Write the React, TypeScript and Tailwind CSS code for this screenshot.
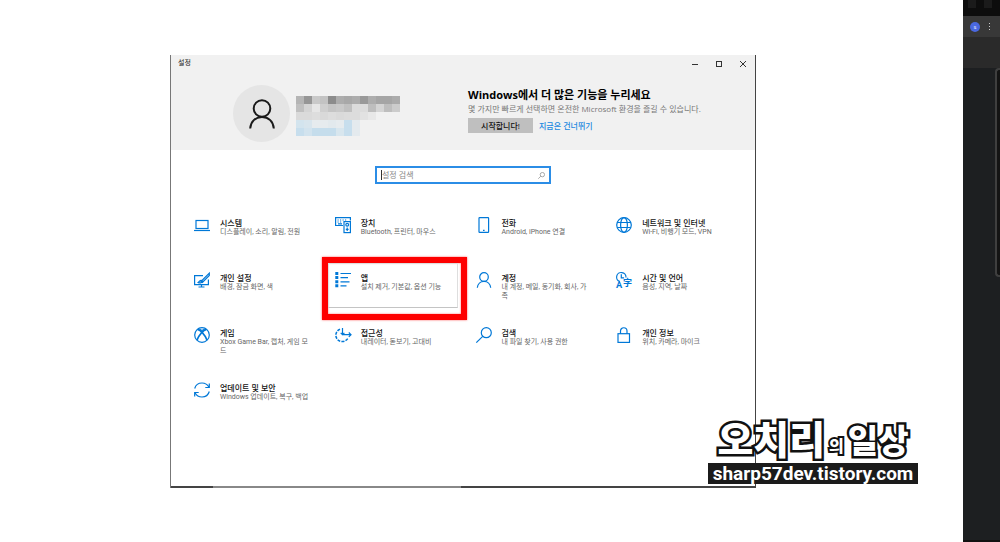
import type { ReactNode } from 'react'

type Setting = { title: string; desc: string; icon: ReactNode; marked?: boolean }

const SETTINGS: Setting[] = [
  {
    title: '시스템', desc: '디스플레이, 소리, 알림, 전원',
    icon: <><rect x="2" y="3.5" width="12" height="8" /><path d="M0 13.5h16" /></>,
  },
  {
    title: '장치', desc: 'Bluetooth, 프린터, 마우스',
    icon: (
      <>
        <path d="M8 8.5H.6V.6h14.8v3" />
        <path d="M2.5 3h1.2M5 3h1.2M7.5 3h1.2M10 3h1.2M2.5 5h1.2M5 5h1.2M3 6.9h4" />
        <rect x="9" y="4.6" width="6.4" height="11" />
        <circle cx="12.2" cy="7.8" r="1.4" />
        <path d="M12.2 10.6v3.4M10.800 12.3h2.8" />
      </>
    ),
  },
  {
    title: '전화', desc: 'Android, iPhone 연결',
    icon: <><rect x="3" y=".6" width="9.6" height="14.8" rx=".6" /><path d="M7 13.3h1.6" /></>,
  },
  {
    title: '네트워크 및 인터넷', desc: 'Wi-Fi, 비행기 모드, VPN',
    icon: (
      <>
        <circle cx="8" cy="8" r="7.3" />
        <ellipse cx="8" cy="8" rx="3.4" ry="7.3" />
        <path d="M1.2 5.5h13.6M1.2 10.5h13.6" />
      </>
    ),
  },
  {
    title: '개인 설정', desc: '배경, 잠금 화면, 색',
    icon: (
      <>
        <path d="M9 3.600H.6v9h13.800V7.500M7.500 12.600V15M4.500 15h6" />
        <path d="M15.300 1.200 8.500 8 7 9.500l1.400 1 6.900-7z" />
        <path d="M7.200 8.300c-1.600 0-1.800 1.600-3 2.200 1.400.8 3.800.4 4.200-1z" />
      </>
    ),
  },
  {
    title: '앱', desc: '설치 제거, 기본값, 옵션 기능', marked: true,
    icon: (
      <>
        <path d="M5.500 1.500H16M5.500 5.700H13M5.500 9.800H14.500M5.500 13.800H11.500" />
        <path strokeWidth="3" strokeDasharray="3 1.100" d="M1.800 0v16" />
      </>
    ),
  },
  {
    title: '계정', desc: '내 계정, 메일, 동기화, 회사, 가족',
    icon: <><circle cx="8" cy="5" r="4.3" /><path d="M1.3 15.7C1.7 12 4.4 9.4 8 9.4s6.300 2.6 6.7 6.3" /></>,
  },
  {
    title: '시간 및 언어', desc: '음성, 지역, 날짜',
    icon: (
      <>
        <path d="M4 9.700A4.700 4.700 0 1 1 10 5.500" />
        <path d="M5.300 2.200v3.600h2.800" />
        <g fill="#0078d7" stroke="none" fontWeight="700">
          <text x="0" y="16" fontSize="9">A</text>
          <text x="7" y="14" fontSize="9">字</text>
        </g>
      </>
    ),
  },
  {
    title: '게임', desc: 'Xbox Game Bar, 캡처, 게임 모드',
    icon: (
      <>
        <circle cx="8" cy="8" r="7.3" />
        <path d="M3.600 2.400C6.500 3 11.500 8.500 13 13M12.400 2.400C9.500 3 4.500 8.500 3 13" strokeWidth="1.8" />
        <path d="M4 2c1.600 0 2.800.5 4 1.400C9.200 2.500 10.400 2 12 2" />
      </>
    ),
  },
  {
    title: '접근성', desc: '내레이터, 돋보기, 고대비',
    icon: (
      <>
        <path d="M5 2.200A6.400 6.400 0 1 0 13 11" strokeDasharray="3 1.2" strokeWidth="1.5" />
        <path d="M7.500 1v6.700H16M5.700 5.800l1.800 1.900 1.900-1.900M13.800 5.500 16 7.700l-2.200 2.200" />
      </>
    ),
  },
  {
    title: '검색', desc: '내 파일 찾기, 사용 권한',
    icon: <><circle cx="10.3" cy="5.7" r="5" /><path d="M6.700 9.300.3 15.700" /></>,
  },
  {
    title: '개인 정보', desc: '위치, 카메라, 마이크',
    icon: <><rect x="2" y="6.7" width="11.5" height="8.7" /><path d="M4.500 6.700V4a3.200 3.200 0 0 1 6.500 0v2.700" /></>,
  },
  {
    title: '업데이트 및 보안', desc: 'Windows 업데이트, 복구, 백업',
    icon: (
      <>
        <path d="M.7 6.500C1.700 3 4.500 1 8 1c3.200 0 5.700 1.700 7 4.300M15.300 9.500C14.300 13 11.500 15 8 15c-3.200 0-5.700-1.700-7-4.300" />
        <path d="M15.300 1.500v4h-4M.7 14.500v-4h4" />
      </>
    ),
  },
]

// account name and mail, pixelated in 8px blocks
const MOSAIC = [
  ['bg-[#b5b5b5]', 'bg-[#969696]', 'bg-[#c9c9c9]', 'bg-[#c3c3c3]', 'bg-[#8c8c8c]', 'bg-[#adadad]', 'bg-[#a8a8a8]', 'bg-[#adadad]', 'bg-[#999999]', 'bg-[#adadad]', 'bg-[#a5a5a5]', 'bg-[#a5a5a5]', 'bg-[#ababab]'],
  ['bg-[#c0c0c0]', 'bg-[#d4d4d4]', 'bg-[#e6e6e6]', 'bg-[#cfcfcf]', 'bg-[#c5c5c5]', 'bg-[#c9c9c9]', 'bg-[#c0c0c0]', 'bg-[#dcdcdc]', 'bg-[#dcdcdc]', 'bg-[#bebebe]', 'bg-[#d4d4d4]', 'bg-[#bebebe]', 'bg-[#cccccc]'],
  ['bg-[#dadada]', 'bg-[#dadada]', 'bg-[#dddddd]', 'bg-[#d9d9d9]', 'bg-[#dddddd]', 'bg-[#dadada]', 'bg-[#dcdcdc]', 'bg-[#dcdcdc]', 'bg-[#e2e2e2]', 'bg-[#e8e8e8]'],
  ['bg-[#d3e4ee]', 'bg-[#d8e5ed]', 'bg-[#e6ebee]', 'bg-[#e6ebee]', 'bg-[#e2e9ed]', 'bg-[#e6ebee]', 'bg-[#c7deed]', 'bg-[#e4eaee]'],
  ['bg-[#c7deed]', 'bg-[#d2e3ee]', 'bg-[#c5ddec]', 'bg-[#c5ddec]', 'bg-[#c5ddec]', 'bg-[#d8e6ee]', 'bg-[#c7deed]', 'bg-[#e4eaee]'],
]

function SettingTile({ item }: { item: Setting }) {
  return (
    <a href="#" className="relative flex items-start gap-[10px]">
      {item.marked && (
        <span className="absolute -left-[13px] -right-[16px] -top-[15px] h-[63px] border-[6px] border-[#fe0000] shadow-[0_0_2px_#ff6060,inset_0_0_2px_#ff6060]">
          <span className="block h-[45px] mr-[3px] border border-[#dedede] border-b-[#c4c4c4]" />
        </span>
      )}
      <svg viewBox="0 0 16 16" className="relative size-4 shrink-0 overflow-visible" fill="none" stroke="#0078d7" strokeWidth="1.2">
        {item.icon}
      </svg>
      <span className="relative min-w-0 flex-1">
        <span className="block text-[8px] leading-[11px] font-medium text-[#111]">{item.title}</span>
        <span className="block font-['Roboto','Noto_Sans_CJK_KR',sans-serif] text-[7px] leading-[9px] break-all text-[#666]">{item.desc}</span>
      </span>
    </a>
  )
}

function Header() {
  return (
    <header className="h-[95px] bg-[#f1f1f1]">
      <div className="flex h-[17px] items-center justify-between pl-[7px]">
        <span className="text-[7px] text-[#222]">설정</span>
        <div className="flex">
          <button aria-label="최소화" className="flex h-[17px] w-6 items-center justify-center">
            <svg viewBox="0 0 6 6" className="size-[6px]" stroke="#333"><path d="M0 3.500h6" /></svg>
          </button>
          <button aria-label="최대화" className="flex h-[17px] w-6 items-center justify-center">
            <svg viewBox="0 0 6 6" className="size-[6px]" fill="none" stroke="#333"><rect x=".5" y=".5" width="5" height="5" /></svg>
          </button>
          <button aria-label="닫기" className="flex h-[17px] w-6 items-center justify-center">
            <svg viewBox="0 0 6 6" className="size-[6px]" stroke="#333"><path d="M0 0l6 6M6 0L0 6" /></svg>
          </button>
        </div>
      </div>
      <div className="flex">
        <div className="flex w-[297px] shrink-0 gap-[6px] pt-[13px] pl-[62px]">
          <div className="flex size-[57px] items-center justify-center rounded-full bg-[#e5e5e5]">
            <svg viewBox="0 0 26 30" className="h-[30px] w-[26px]" fill="none" stroke="#1a1a1a" strokeWidth="2">
              <circle cx="13" cy="9.5" r="8.3" />
              <path d="M1.200 29.500C1.600 22.500 6.500 18 13 18s11.400 4.500 11.800 11.500" />
            </svg>
          </div>
          <div className="pt-[11px]">
            {MOSAIC.map((row, i) => (
              <div key={i} className="flex">
                {row.map((c, j) => <span key={j} className={`size-2 ${c}`} />)}
              </div>
            ))}
          </div>
        </div>
        <div className="pt-4">
          <h1 className="text-[11px] leading-[14px] font-bold text-black">Windows에서 더 많은 기능을 누리세요</h1>
          <p className="text-[8px] leading-[14px] text-[#777]">몇 가지만 빠르게 선택하면 온전한 Microsoft 환경을 즐길 수 있습니다.</p>
          <div className="mt-[2px] flex items-center gap-[6px]">
            <button className="h-[15px] w-[65px] bg-[#bfbfbf] text-[8px] leading-[15px] font-medium text-[#111]">시작합니다!</button>
            <a href="#" className="text-[8px] leading-[15px] font-medium text-[#2088e0]">지금은 건너뛰기</a>
          </div>
        </div>
      </div>
    </header>
  )
}

function Watermark() {
  return (
    <div className="absolute right-[45px] bottom-[58px] w-[210px] font-['Noto_Sans_CJK_KR',sans-serif]">
      <div className="flex items-end justify-center gap-1 pb-[6px] font-black text-white [-webkit-text-stroke:5px_#111] [paint-order:stroke_fill]">
        <span className="text-[39px] leading-[40px]">오치리</span>
        <span className="text-[16px] leading-[24px] [-webkit-text-stroke:4px_#111]">의</span>
        <span className="text-[33px] leading-[36px]">일상</span>
      </div>
      <div className="h-[21px] bg-[#1b1b1b] text-center font-['Roboto',sans-serif] text-[19px] leading-[21px] font-bold text-white">
        sharp57dev.tistory.com
      </div>
    </div>
  )
}

function BrowserEdge() {
  return (
    <aside className="flex w-[37px] shrink-0 flex-col border-b-2 border-[#111] bg-[#1d1f21]">
      <div className="flex h-4 bg-[#0d0d0d] pl-[5px]">
        <span className="h-2 w-2 bg-[#1b1b1b]" />
        <span className="ml-2 h-2 w-2 bg-[#1b1b1b]" />
      </div>
      <div className="flex h-[21px] items-center bg-[#383838] pl-[7px]">
        <span className="flex size-[10px] items-center justify-center rounded-full bg-[#4a68e0] text-[6px] leading-[10px] text-white">s</span>
        <button aria-label="메뉴" className="ml-[9px] flex flex-col gap-[2px]">
          <span className="size-px bg-[#ccc]" />
          <span className="size-px bg-[#ccc]" />
          <span className="size-px bg-[#ccc]" />
        </button>
      </div>
      <div className="h-[31px] bg-[#2a2a2a]" />
      <div className="ml-auto h-[209px] w-[5px] rounded-l-sm border-2 border-r-0 border-[#3f3f3f] bg-[#141414]" />
    </aside>
  )
}

export default function App() {
  return (
    <div className="flex min-h-screen bg-white font-['Open_Sans','Noto_Sans_CJK_KR',sans-serif]">
      <main className="relative flex flex-1 flex-col pt-[55px] pr-[207px] pb-[54px] pl-[170px]">
        <section className="flex flex-1 flex-col border-r border-l border-r-[#444] border-l-[#777]">
          <Header />
          <label className="mx-auto mt-4 flex h-[18px] w-[176px] items-center border-2 border-[#2b8de6] px-1">
            <span className="h-[10px] w-px bg-[#333]" />
            <input type="text" aria-label="설정 검색" placeholder="설정 검색" className="min-w-0 flex-1 text-[8px] leading-[14px] outline-none placeholder:text-[#888]" />
            <svg viewBox="0 0 8 8" className="size-[7px]" fill="none" stroke="#888" strokeWidth=".8">
              <circle cx="5" cy="3" r="2.5" />
              <path d="M3.200 4.800.3 7.700" />
            </svg>
          </label>
          <nav className="mt-[33px] grid auto-rows-[55px] grid-cols-4 gap-x-[25px] pr-[23px] pl-[23px]">
            {SETTINGS.map((s) => <SettingTile key={s.title} item={s} />)}
          </nav>
          <div className="mt-auto flex h-[2px] bg-[#444]">
            <div className="ml-[42px] w-[248px] bg-[#888]" />
          </div>
        </section>
        <Watermark />
      </main>
      <BrowserEdge />
    </div>
  )
}
